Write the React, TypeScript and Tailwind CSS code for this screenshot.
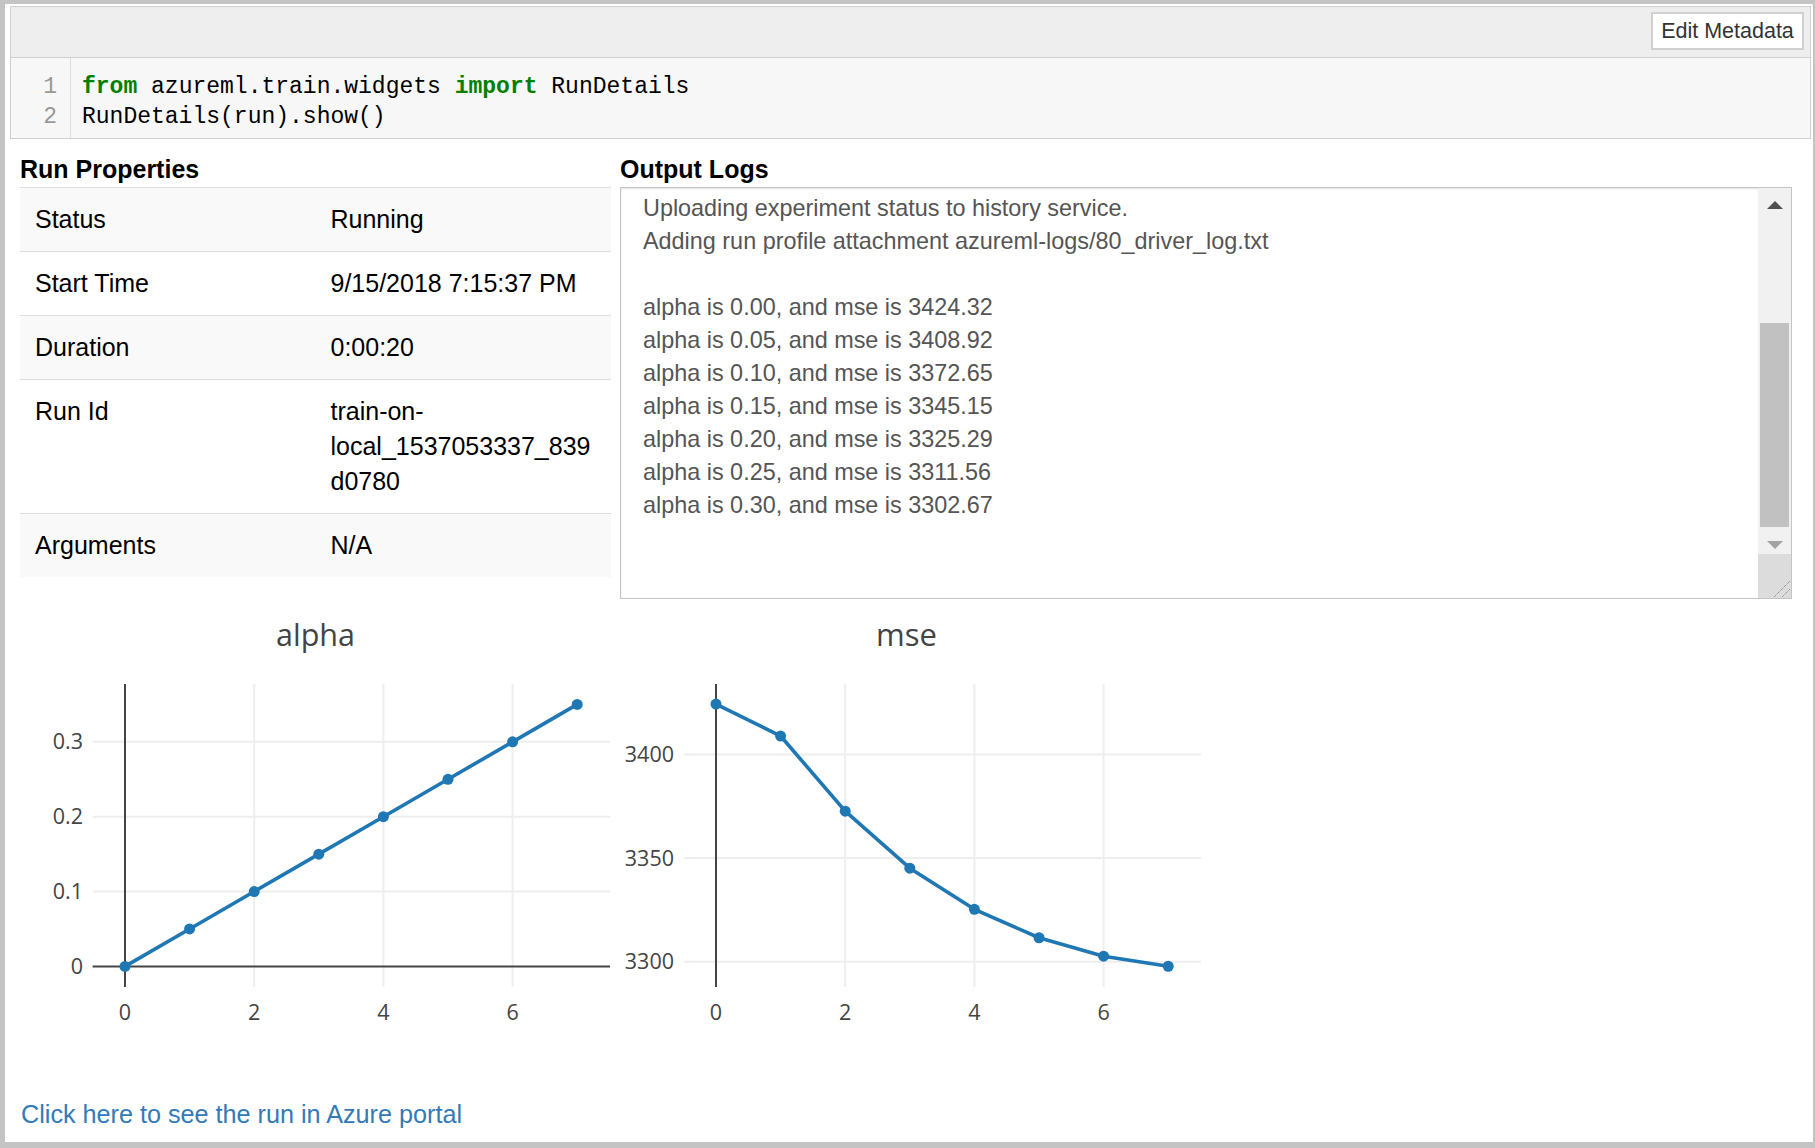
import React from "react";

const alpha = [0, 0.05, 0.1, 0.15, 0.2, 0.25, 0.3, 0.35];
const mse = [3424.32, 3408.92, 3372.65, 3345.15, 3325.29, 3311.56, 3302.67, 3297.8];

const logLines = [
  "Uploading experiment status to history service.",
  "Adding run profile attachment azureml-logs/80_driver_log.txt",
  "",
  "alpha is 0.00, and mse is 3424.32",
  "alpha is 0.05, and mse is 3408.92",
  "alpha is 0.10, and mse is 3372.65",
  "alpha is 0.15, and mse is 3345.15",
  "alpha is 0.20, and mse is 3325.29",
  "alpha is 0.25, and mse is 3311.56",
  "alpha is 0.30, and mse is 3302.67",
];

const props: { label: string; value: React.ReactNode }[] = [
  { label: "Status", value: "Running" },
  { label: "Start Time", value: "9/15/2018 7:15:37 PM" },
  { label: "Duration", value: "0:00:20" },
  {
    label: "Run Id",
    value: (
      <>
        train-on-
        <br />
        local_1537053337_839
        <br />
        d0780
      </>
    ),
  },
  { label: "Arguments", value: "N/A" },
];

// plot x position for run index
const px = (i: number) => 105 + i * 64.6;
const font = "'Open Sans', sans-serif";

type Tick = { v: number; label: string };

function Chart({
  title,
  titleSize,
  values,
  toY,
  ticks,
  zeroY,
}: {
  title: string;
  titleSize: number;
  values: number[];
  toY: (v: number) => number;
  ticks: Tick[];
  zeroY?: number;
}) {
  const pts = values.map((v, i) => `${px(i)},${toY(v)}`).join(" ");
  return (
    <svg width={591} height={450} className="block shrink-0">
      <text x={295.5} y={45} textAnchor="middle" fontFamily={font} fontSize={titleSize} fill="#444">
        {title}
      </text>
      {[2, 4, 6].map((i) => (
        <line key={i} x1={px(i)} x2={px(i)} y1={83} y2={386} stroke="#eeeeee" strokeWidth={2} />
      ))}
      {ticks
        .filter((t) => t.v !== zeroY)
        .map((t) => (
          <line key={t.label} x1={72.6} x2={590} y1={toY(t.v)} y2={toY(t.v)} stroke="#eeeeee" strokeWidth={2} />
        ))}
      {zeroY !== undefined && (
        <line x1={72.6} x2={590} y1={toY(zeroY)} y2={toY(zeroY)} stroke="#444" strokeWidth={2} />
      )}
      <line x1={105} x2={105} y1={83} y2={386} stroke="#444" strokeWidth={2} />
      <polyline points={pts} fill="none" stroke="#1f77b4" strokeWidth={3.6} strokeLinejoin="round" />
      {values.map((v, i) => (
        <circle key={i} cx={px(i)} cy={toY(v)} r={5.5} fill="#1f77b4" />
      ))}
      {ticks.map((t) => (
        <text key={t.label} x={63} y={toY(t.v) + 7.5} textAnchor="end" fontFamily={font} fontSize={21.5} fill="#444">
          {t.label}
        </text>
      ))}
      {[0, 2, 4, 6].map((i) => (
        <text key={i} x={px(i)} y={419} textAnchor="middle" fontFamily={font} fontSize={21.5} fill="#444">
          {i}
        </text>
      ))}
    </svg>
  );
}

function Scrollbar() {
  return (
    <div className="w-[33px] shrink-0 flex flex-col bg-[#f1f1f1]">
      <div className="h-[33px] flex items-center justify-center pt-[1px]">
        <div className="w-0 h-0 border-l-[8px] border-r-[8px] border-b-[8px] border-l-transparent border-r-transparent border-b-[#505050]" />
      </div>
      <div className="flex-1 flex flex-col justify-end">
        <div className="h-[204px] mx-[2px] bg-[#c1c1c1]" />
      </div>
      <div className="h-[27px] flex items-center justify-center pt-[9px]">
        <div className="w-0 h-0 border-l-[8px] border-r-[8px] border-t-[8px] border-l-transparent border-r-transparent border-t-[#a3a3a3]" />
      </div>
      <div className="h-[44px] bg-[#dcdcdc]">
        <svg width={33} height={44} className="block">
          <line x1={16} y1={43} x2={32} y2={27} stroke="#7a7a7a" strokeWidth={1} strokeDasharray="1 1" />
          <line x1={24} y1={43} x2={32} y2={35} stroke="#7a7a7a" strokeWidth={1} strokeDasharray="1 1" />
        </svg>
      </div>
    </div>
  );
}

export default function App() {
  return (
    <div className="h-[1148px] w-[1815px] bg-[#c4c4c4] pl-[5px] pt-[4px] pr-[2px] pb-[6px] font-['Liberation_Sans',Arial,sans-serif]">
      <div className="h-full bg-white overflow-hidden">
        {/* cell: toolbar + code */}
        <div className="mt-[2px] ml-[5px] mr-[2px] border border-[#cfcfcf]">
          <div className="h-[51px] bg-[#eeeeee] border-b border-[#cfcfcf] flex justify-end items-start pt-[5px] pr-[6px]">
            <button className="h-[38px] w-[153px] bg-white border-2 border-[#d0d0d0] text-[21.5px] text-[#333] leading-none pt-[1px]">
              Edit Metadata
            </button>
          </div>
          <div className="h-[80px] bg-[#f7f7f7] flex font-['Liberation_Mono',monospace] text-[23px] leading-[30px]">
            <div className="w-[60px] border-r border-[#dddddd] pt-[14px] pr-[13px] text-right text-[#999]">
              <div>1</div>
              <div>2</div>
            </div>
            <div className="pl-[11px] pt-[14px] text-black whitespace-pre">
              <div>
                <span className="font-bold text-[#008000]">from</span> azureml.train.widgets{" "}
                <span className="font-bold text-[#008000]">import</span> RunDetails
              </div>
              <div>RunDetails(run).show()</div>
            </div>
          </div>
        </div>

        {/* widget output */}
        <div className="pl-[15px] pt-[12px]">
          <div className="flex gap-[9px]">
            <div className="w-[591px] shrink-0">
              <div className="text-[25px] font-bold leading-[36px] text-black">Run Properties</div>
              <table className="w-full table-fixed border-collapse text-[25px] leading-[35px] text-black">
                <tbody>
                  {props.map((p, i) => (
                    <tr key={p.label} className={i % 2 === 0 ? "bg-[#f9f9f9]" : "bg-white"}>
                      <td className="w-1/2 border-t border-[#dddddd] px-[15px] py-[14px] align-top">{p.label}</td>
                      <td className="w-1/2 border-t border-[#dddddd] px-[15px] py-[14px] align-top">{p.value}</td>
                    </tr>
                  ))}
                </tbody>
              </table>
            </div>
            <div className="w-[1172px] shrink-0">
              <div className="text-[25px] font-bold leading-[36px] text-black">Output Logs</div>
              <div className="h-[412px] flex border border-[#c4c4c4] shadow-[inset_0_1px_2px_rgba(0,0,0,0.12)] bg-white">
                <div className="flex-1 overflow-hidden pl-[22px] pt-[4px] text-[23.4px] leading-[33px] text-[#555]">
                  {logLines.map((l, i) => (
                    <div key={i} className="h-[33px] whitespace-pre">
                      {l}
                    </div>
                  ))}
                </div>
                <Scrollbar />
              </div>
            </div>
          </div>

          <div className="flex mt-[2px]">
            <Chart
              title="alpha"
              titleSize={30.5}
              values={alpha}
              toY={(v) => 365.4 - v * 748.5}
              zeroY={0}
              ticks={[
                { v: 0, label: "0" },
                { v: 0.1, label: "0.1" },
                { v: 0.2, label: "0.2" },
                { v: 0.3, label: "0.3" },
              ]}
            />
            <Chart
              title="mse"
              titleSize={31}
              values={mse}
              toY={(v) => 360.7 - (v - 3300) * 2.072}
              ticks={[
                { v: 3300, label: "3300" },
                { v: 3350, label: "3350" },
                { v: 3400, label: "3400" },
              ]}
            />
          </div>

          <div className="mt-[46px] pl-[1px] text-[25.2px] leading-[35px]">
            <a className="text-[#337ab7]">Click here to see the run in Azure portal</a>
          </div>
        </div>
      </div>
    </div>
  );
}
